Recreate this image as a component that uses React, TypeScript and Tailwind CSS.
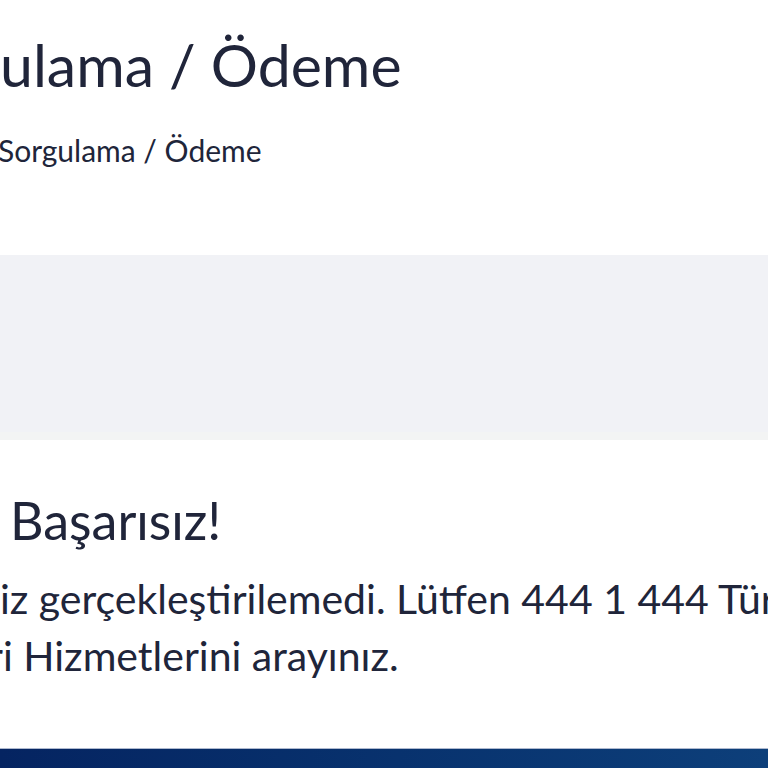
import React from "react";

export default function App() {
  return (
    <div className="w-[768px] h-[768px] overflow-hidden bg-white flex flex-col font-['Lato','Noto_Sans',sans-serif] text-[#20253a]">
      <div className="pt-[30px]">
        <h1 className="text-[59px] leading-[70px] font-normal whitespace-nowrap">ulama / Ödeme</h1>
        <div className="mt-[32px] -ml-[2px] text-[30px] leading-[36px] whitespace-nowrap">Sorgulama / Ödeme</div>
      </div>
      <div className="mt-[87px] h-[177px] bg-[#f1f2f6]" />
      <div className="h-[8px] bg-[#f3f4f4]" />
      <div className="mt-[50px] pl-[10px] text-[52px] leading-[60px] whitespace-nowrap">Başarısız!</div>
      <div className="mt-[20px] text-[41px] leading-[57px] whitespace-nowrap">
        <div>iz gerçekleştirilemedi. Lütfen 444 1 444 Türk</div>
        <div className="-ml-[12px]">ri Hizmetlerini arayınız.</div>
      </div>
      <div className="mt-auto h-[20px] border-t border-[#aeb9cf] bg-gradient-to-r from-[#052461] to-[#0d3f7a]" />
    </div>
  );
}
